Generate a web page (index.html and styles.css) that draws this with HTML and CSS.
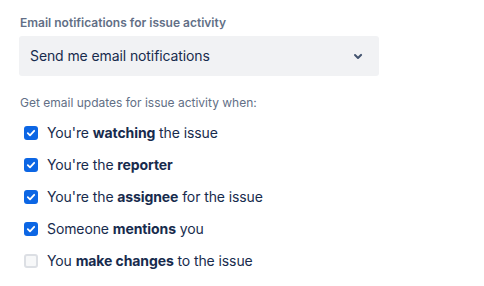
FILE: index.html
```html
<!DOCTYPE html>
<html>
<head>
<meta charset="utf-8">
<link rel="stylesheet" href="styles.css">
</head>
<body>
<div class="page">
  <div class="field">
    <label class="field-label">Email notifications for issue activity</label>
    <div class="select">
      <span class="select-value">Send me email notifications</span>
      <svg class="chevron" width="24" height="24" viewBox="0 0 24 24"><path d="M8.3 10.3a1 1 0 0 1 1.4 0L12 12.6l2.3-2.3a1 1 0 1 1 1.4 1.4l-3 3a1 1 0 0 1-1.4 0l-3-3a1 1 0 0 1 0-1.4z" fill="#44546F"/></svg>
    </div>
  </div>
  <p class="hint">Get email updates for issue activity when:</p>
  <ul class="checks">
    <li class="check"><span class="box on"><svg width="14" height="14" viewBox="0 0 14 14"><path d="M3.8 7.2l2.2 2.1 4.2-4.5" fill="none" stroke="#fff" stroke-width="1.8" stroke-linecap="round" stroke-linejoin="round"/></svg></span><span>You're <b>watching</b> the issue</span></li>
    <li class="check"><span class="box on"><svg width="14" height="14" viewBox="0 0 14 14"><path d="M3.8 7.2l2.2 2.1 4.2-4.5" fill="none" stroke="#fff" stroke-width="1.8" stroke-linecap="round" stroke-linejoin="round"/></svg></span><span>You're the <b>reporter</b></span></li>
    <li class="check"><span class="box on"><svg width="14" height="14" viewBox="0 0 14 14"><path d="M3.8 7.2l2.2 2.1 4.2-4.5" fill="none" stroke="#fff" stroke-width="1.8" stroke-linecap="round" stroke-linejoin="round"/></svg></span><span>You're the <b>assignee</b> for the issue</span></li>
    <li class="check"><span class="box on"><svg width="14" height="14" viewBox="0 0 14 14"><path d="M3.8 7.2l2.2 2.1 4.2-4.5" fill="none" stroke="#fff" stroke-width="1.8" stroke-linecap="round" stroke-linejoin="round"/></svg></span><span>Someone <b>mentions</b> you</span></li>
    <li class="check"><span class="box"></span><span>You <b>make changes</b> to the issue</span></li>
  </ul>
  <p class="more">You may also receive email notifications for other issue activity based on your Jira settings.</p>
</div>
</body>
</html>
```
FILE: styles.css
```css
html, body { margin: 0; padding: 0; background: #fff; }
body { font-family: Inter, "Noto Sans", sans-serif; color: #172B4D; overflow: hidden; height: 286px; }
.page { padding: 15px 0 0 19px; width: 360px; }
.field { display: flex; flex-direction: column; }
.field-label { font-size: 12px; font-weight: 600; color: #626F86; line-height: 16px; margin-left: 1px; }
.select { margin-top: 5px; height: 40px; background: #F1F2F4; border-radius: 3px; display: flex; align-items: center; justify-content: space-between; padding: 0 9px 0 11px; box-sizing: border-box; }
.select-value { font-size: 14px; line-height: 20px; color: #172B4D; letter-spacing: -0.1px; }
.chevron { display: block; }
.hint { margin: 19px 0 0 1px; font-size: 12px; line-height: 16px; color: #626F86; }
.checks { list-style: none; margin: 12px 0 0 0; padding: 0; display: flex; flex-direction: column; gap: 12px; }
.check { display: flex; align-items: center; gap: 9px; height: 20px; font-size: 14px; line-height: 20px; padding-left: 5px; letter-spacing: -0.1px; }
.check b { font-weight: 700; }
.box { width: 14px; height: 14px; border-radius: 3px; box-sizing: border-box; border: 2px solid #DCDFE4; background: #F7F8F9; display: flex; align-items: center; justify-content: center; flex: none; }
.box.on { background: #0C66E4; border: none; }
.box svg { display: block; }
.more { margin: 14px 0 0 1px; font-size: 12px; color: #626F86; line-height: 16px; width: 470px; }
```
